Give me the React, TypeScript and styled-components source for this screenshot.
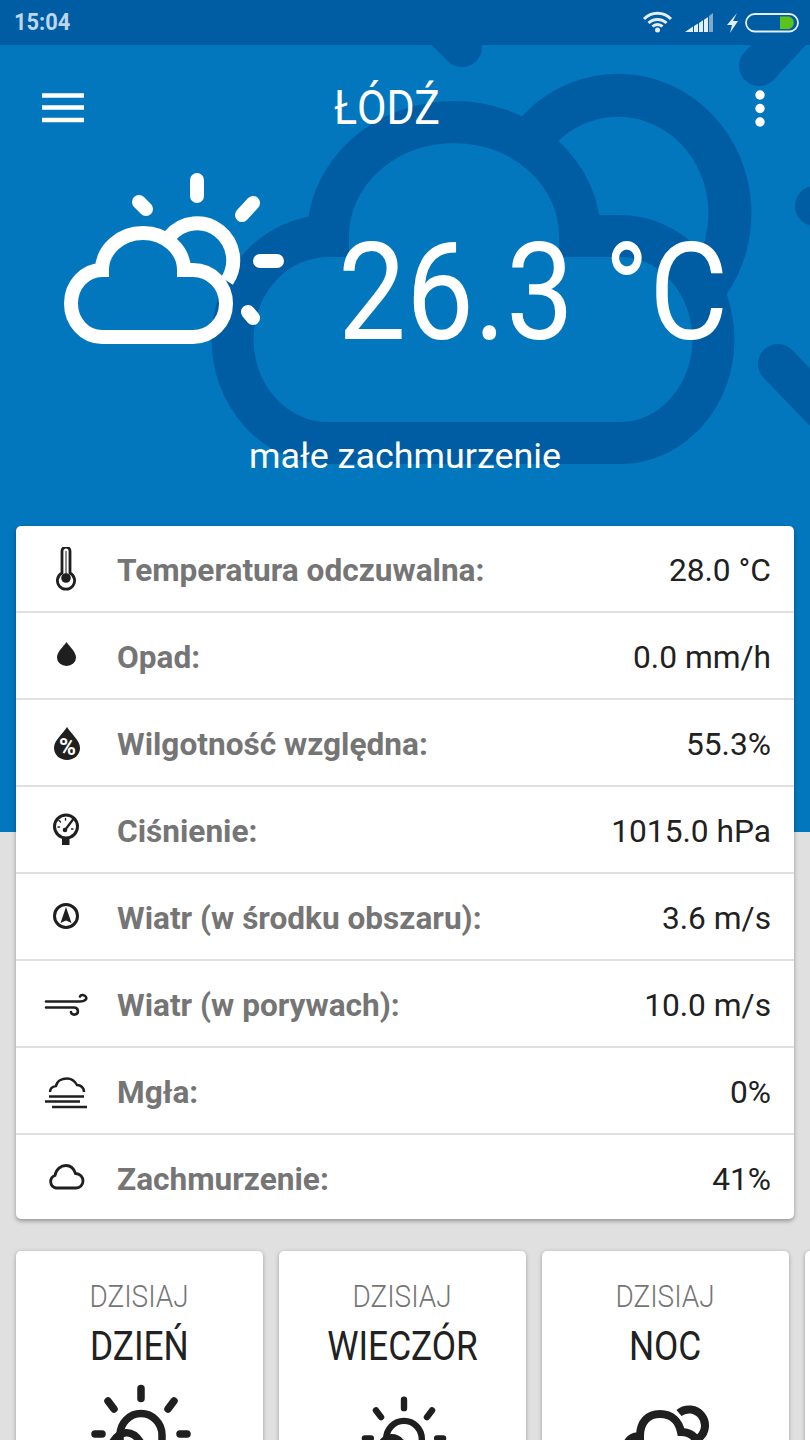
import React from "react";
import styled, { createGlobalStyle } from "styled-components";

const Global = createGlobalStyle`
  html, body { margin: 0; padding: 0; background: #e0e0e0; }
  body { font-family: Roboto, "Liberation Sans", sans-serif; }
`;

const Page = styled.div`
  width: 810px;
  height: 1440px;
  overflow: hidden;
  background: #e0e0e0;
`;
const Hero = styled.section`
  position: relative;
  height: 832px;
  background: #0277bd;
  overflow: hidden;
`;
const Backdrop = styled.svg`
  position: absolute;
  inset: 0;
  width: 810px;
  height: 832px;
`;
const StatusBar = styled.div`
  position: relative;
  height: 45px;
  background: #005ca3;
  display: flex;
  align-items: center;
  padding: 0 10px 0 14px;
  box-sizing: border-box;
`;
const Time = styled.span`
  font: 700 23px Roboto, sans-serif;
  color: #bcd6ec;
  display: inline-block;
  transform: scaleX(0.95);
  transform-origin: left center;
  margin-top: -1px;
`;
const StatusIcons = styled.svg`
  margin-left: auto;
  width: 160px;
  height: 45px;
  flex: none;
`;
const Header = styled.header`
  position: relative;
  display: flex;
  align-items: flex-start;
  height: 100px;
  padding: 38px 44px 0 42px;
  box-sizing: border-box;
`;
const Menu = styled.svg`
  width: 42px;
  height: 44px;
  flex: none;
`;
const Kebab = styled.svg`
  width: 12px;
  height: 44px;
  flex: none;
  margin-left: auto;
  margin-top: 5px;
`;
const City = styled.h1`
  margin: -3px 0 0 250px;
  font: 400 49px/56px Roboto, sans-serif;
  color: #fff;
  display: inline-block;
  transform: scaleX(0.875);
  transform-origin: left center;
  white-space: nowrap;
`;
const Current = styled.div`
  position: relative;
  display: flex;
  align-items: flex-start;
  height: 289px;
`;
const BigIcon = styled.svg`
  width: 338px;
  height: 200px;
  flex: none;
`;
const Temp = styled.div`
  font: 400 136px/160px Roboto, sans-serif;
  color: #fff;
  white-space: nowrap;
  display: inline-block;
  transform: scaleX(0.89);
  transform-origin: left center;
  margin-top: 68px;
`;
const Condition = styled.div`
  position: relative;
  text-align: center;
  font: 400 35.9px/44px Roboto, sans-serif;
  color: #fff;
`;
const Content = styled.main`
  position: relative;
  margin-top: -306px;
  padding: 0 16px;
`;
const Table = styled.div`
  background: #fff;
  border-radius: 5px;
  box-shadow: 0 2px 4px rgba(0, 0, 0, 0.35);
  width: 778px;
`;
const Row = styled.div`
  display: flex;
  align-items: center;
  height: 87px;
  box-sizing: border-box;
  padding: 0 23px 0 28px;
  border-bottom: 2px solid #e0e0e0;
  &:last-child { border-bottom: 0; height: 84px; }
`;
const RowIcon = styled.svg`
  width: 44px;
  height: 44px;
  flex: none;
  margin-right: 29px;
`;
const Label = styled.span`
  font: 700 31.6px Roboto, sans-serif;
  color: #757575;
  margin-top: 4px;
`;
const Value = styled.span`
  margin-left: auto;
  font: 400 31.7px Roboto, sans-serif;
  color: #212121;
  margin-top: 4px;
`;
const Cards = styled.div`
  display: flex;
  gap: 16px;
  margin-top: 32px;
  width: 900px;
`;
const Card = styled.article`
  width: 247px;
  flex: none;
  height: 300px;
  background: #fff;
  border-radius: 5px;
  box-shadow: 0 1px 4px rgba(0, 0, 0, 0.3);
  display: flex;
  flex-direction: column;
  align-items: center;
`;
const Day = styled.div`
  margin-top: 27px;
  font: 300 31px/38px Roboto, sans-serif;
  color: #757575;
  transform: scaleX(0.9);
  white-space: nowrap;
`;
const Part = styled.div`
  margin-top: 5px;
  font: 400 41px/50px Roboto, sans-serif;
  color: #212121;
  transform: scaleX(0.86);
  white-space: nowrap;
`;
const CardIcon = styled.svg`
  margin-top: 12px;
  width: 120px;
  height: 100px;
  flex: none;
`;

const ICON = "#1f1f1f";

const Thermometer = () => (
  <g fill="none" stroke={ICON}>
    <path d="M18 26V4a4 4 0 0 1 8 0v22a8.600 8.600 0 1 1-8 0z" strokeWidth="2.800" />
    <path d="M22 4v24" strokeWidth="1" />
    <circle cx="22" cy="31" r="4.800" fill={ICON} stroke="none" />
  </g>
);
const Drop = () => (
  <path fill={ICON} d="M22.500 8C26 13 32 18 32 23.500a9.500 8.500 0 0 1-19 0C13 18 19 13 22.500 8z" />
);
const Humidity = () => (
  <g>
    <path fill={ICON} d="M23 6C27 13 36 19 36 27C36 34 30 39 23 39C16 39 10 34 10 27C10 19 19 13 23 6z" />
    <text x="23.500" y="34" textAnchor="middle" fontFamily="Roboto, sans-serif" fontWeight="700" fontSize="23" fill="#fff">%</text>
  </g>
);
const Gauge = () => (
  <g stroke={ICON} fill="none" strokeLinecap="round">
    <circle cx="22" cy="18.500" r="11.500" strokeWidth="3" />
    <rect x="18" y="30" width="7.500" height="7" fill={ICON} stroke="none" />
    <path d="M21 22L29 11.500" strokeWidth="2.200" />
    <circle cx="21" cy="22" r="2.300" fill={ICON} stroke="none" />
    <path d="M15 12.500l1.500 1.500M21.500 10.500v1.500M14 19h1.500M27.500 21h1.500" strokeWidth="1.400" />
  </g>
);
const Compass = () => (
  <g>
    <circle cx="22" cy="21" r="11.500" fill="none" stroke={ICON} strokeWidth="3" />
    <path fill={ICON} d="M22 12L27.500 28L22 25.500L16.500 28z" />
  </g>
);
const Wind = () => (
  <g fill="none" stroke={ICON} strokeWidth="2.600" strokeLinecap="round">
    <path d="M2 19.500H36C41 19.500 43 17 42 15C41 13 37 12 36 14.500" />
    <path d="M2 25.500H30C35 25.500 35 32 31 32.500C28 33 27 31 27 30" />
  </g>
);
const Fog = () => (
  <g fill="none" stroke={ICON} strokeWidth="2.500">
    <path d="M6 23C6 19 9 17.500 12 17C13 12 18 9.500 23 9.500C28 9.500 31 12.500 33 16C37 16 40 19 40 23" />
    <path d="M5 27.500H40M1 32.500H36M8 38H43" />
  </g>
);
const CloudLine = () => (
  <path fill="none" stroke={ICON} strokeWidth="2.800" d="M12 33A6.500 6.500 0 0 1 11 20.500C12 14 17 10.500 22 10.500C27 10.500 30 14 31.500 18.500C36 18.500 39 22 39 26C39 30 36 33 32 33z" />
);

const rows = [
  { label: "Temperatura odczuwalna:", value: "28.0 °C", Glyph: Thermometer },
  { label: "Opad:", value: "0.0 mm/h", Glyph: Drop },
  { label: "Wilgotność względna:", value: "55.3%", Glyph: Humidity },
  { label: "Ciśnienie:", value: "1015.0 hPa", Glyph: Gauge },
  { label: "Wiatr (w środku obszaru):", value: "3.6 m/s", Glyph: Compass },
  { label: "Wiatr (w porywach):", value: "10.0 m/s", Glyph: Wind },
  { label: "Mgła:", value: "0%", Glyph: Fog },
  { label: "Zachmurzenie:", value: "41%", Glyph: CloudLine },
];

const SunSmall = ({ s }: { s: number }) => (
  <g fill="none" stroke={ICON} strokeWidth="7.500" strokeLinecap="round" transform={`translate(61 0) scale(${s})`}>
    <path d="M0 5.500V15.500M-33 18L-27 26M33 18L27 26M-46 51H-39M39 51H46" />
    <path d="M-21 52A21 21.500 0 0 1 21 52V80M-21 52V80" />
    <path d="M-30 62C-22 46 -8 46 0 60" />
  </g>
);

const days = [
  { part: "DZIEŃ", icon: <SunSmall s={1} /> },
  { part: "WIECZÓR", icon: <g transform="translate(0 12)"><SunSmall s={0.85} /></g> },
  {
    part: "NOC",
    icon: (
      <g fill="none" stroke={ICON} strokeWidth="8" transform="translate(-2 3)">
        <path d="M75 27A16 16 0 0 1 95 52" />
        <path d="M22 62C23 54 28 50 36 50C36 36 44 28 56 28C68 28 75 36 77 46C86 46 92 50 95 60" />
      </g>
    ),
  },
];

export default function App() {
  return (
    <Page>
      <Global />
      <Hero>
        <Backdrop viewBox="0 0 810 832">
          <g fill="none" stroke="#005ca3" strokeWidth="42">
            <path d="M535 134A112 118 0 0 1 709 282" strokeWidth="43" />
            <path d="M328 443A95 103 0 0 1 328 236A126 114 0 0 1 580 236H620A93 103 0 0 1 620 443z" />
            <g strokeLinecap="round" strokeWidth="40">
              <path d="M420 5L462 47" />
              <path d="M759 66L830 -10" />
              <path d="M815 206H850" />
              <path d="M778 364L830 418" />
            </g>
          </g>
        </Backdrop>
        <StatusBar>
          <Time>15:04</Time>
          <StatusIcons viewBox="0 0 160 45">
            <g fill="none" stroke="#e3eef7" strokeWidth="3">
              <path d="M4 19A19 19 0 0 1 31 19" />
              <path d="M8.500 23A13 13 0 0 1 26.500 23" />
              <path d="M12.500 26.500A7 7 0 0 1 22.500 26.500" />
            </g>
            <circle cx="17.500" cy="30" r="2.500" fill="#e3eef7" />
            <path d="M45 32H53V26.500zM54 32H58V23.500L54 26zM59 32H63V20.300L59 23zM64 32H68V17L64 19.700z" fill="#e3eef7" />
            <path d="M69 32H73V13L69 16z" fill="#7fa9cc" />
            <path d="M97 13L87 25H92L90 33L98 21H93z" fill="#e3eef7" />
            <rect x="106" y="14" width="52" height="17.500" rx="8.700" fill="none" stroke="#e3eef7" strokeWidth="1.800" />
            <path d="M140 16.500H149A6.500 6.500 0 0 1 149 29H140z" fill="#5cc21c" />
          </StatusIcons>
        </StatusBar>
        <Header>
          <Menu viewBox="0 0 42 44">
            <path d="M0 12.500H42M0 24.500H42M0 37H42" stroke="#fff" strokeWidth="4.500" />
          </Menu>
          <City>ŁÓDŹ</City>
          <Kebab viewBox="0 0 12 44">
            <circle cx="6" cy="7" r="4.700" fill="#fff" />
            <circle cx="6" cy="20.500" r="4.700" fill="#fff" />
            <circle cx="6" cy="34" r="4.700" fill="#fff" />
          </Kebab>
        </Header>
        <Current>
          <BigIcon viewBox="0 145 338 200">
            <g fill="none" stroke="#fff" strokeWidth="14" strokeLinecap="round">
              <path d="M197 180V196M139 202L146 209M253 203L242 215M260 261H277M248 312L253 318" />
              <path d="M170 236A36 37 0 0 1 227 281" strokeLinecap="butt" />
              <path d="M102 337A31 33.500 0 0 1 102 270A41 37 0 0 1 184 270H193A33 33.500 0 0 1 193 337z" strokeLinecap="butt" />
            </g>
          </BigIcon>
          <Temp>26.3 °C</Temp>
        </Current>
        <Condition>małe zachmurzenie</Condition>
      </Hero>
      <Content>
        <Table>
          {rows.map(({ label, value, Glyph }) => (
            <Row key={label}>
              <RowIcon viewBox="0 0 44 44"><Glyph /></RowIcon>
              <Label>{label}</Label>
              <Value>{value}</Value>
            </Row>
          ))}
        </Table>
        <Cards>
          {days.map((d) => (
            <Card key={d.part}>
              <Day>DZISIAJ</Day>
              <Part>{d.part}</Part>
              <CardIcon viewBox="0 0 120 100">{d.icon}</CardIcon>
            </Card>
          ))}
          <Card />
        </Cards>
      </Content>
    </Page>
  );
}
